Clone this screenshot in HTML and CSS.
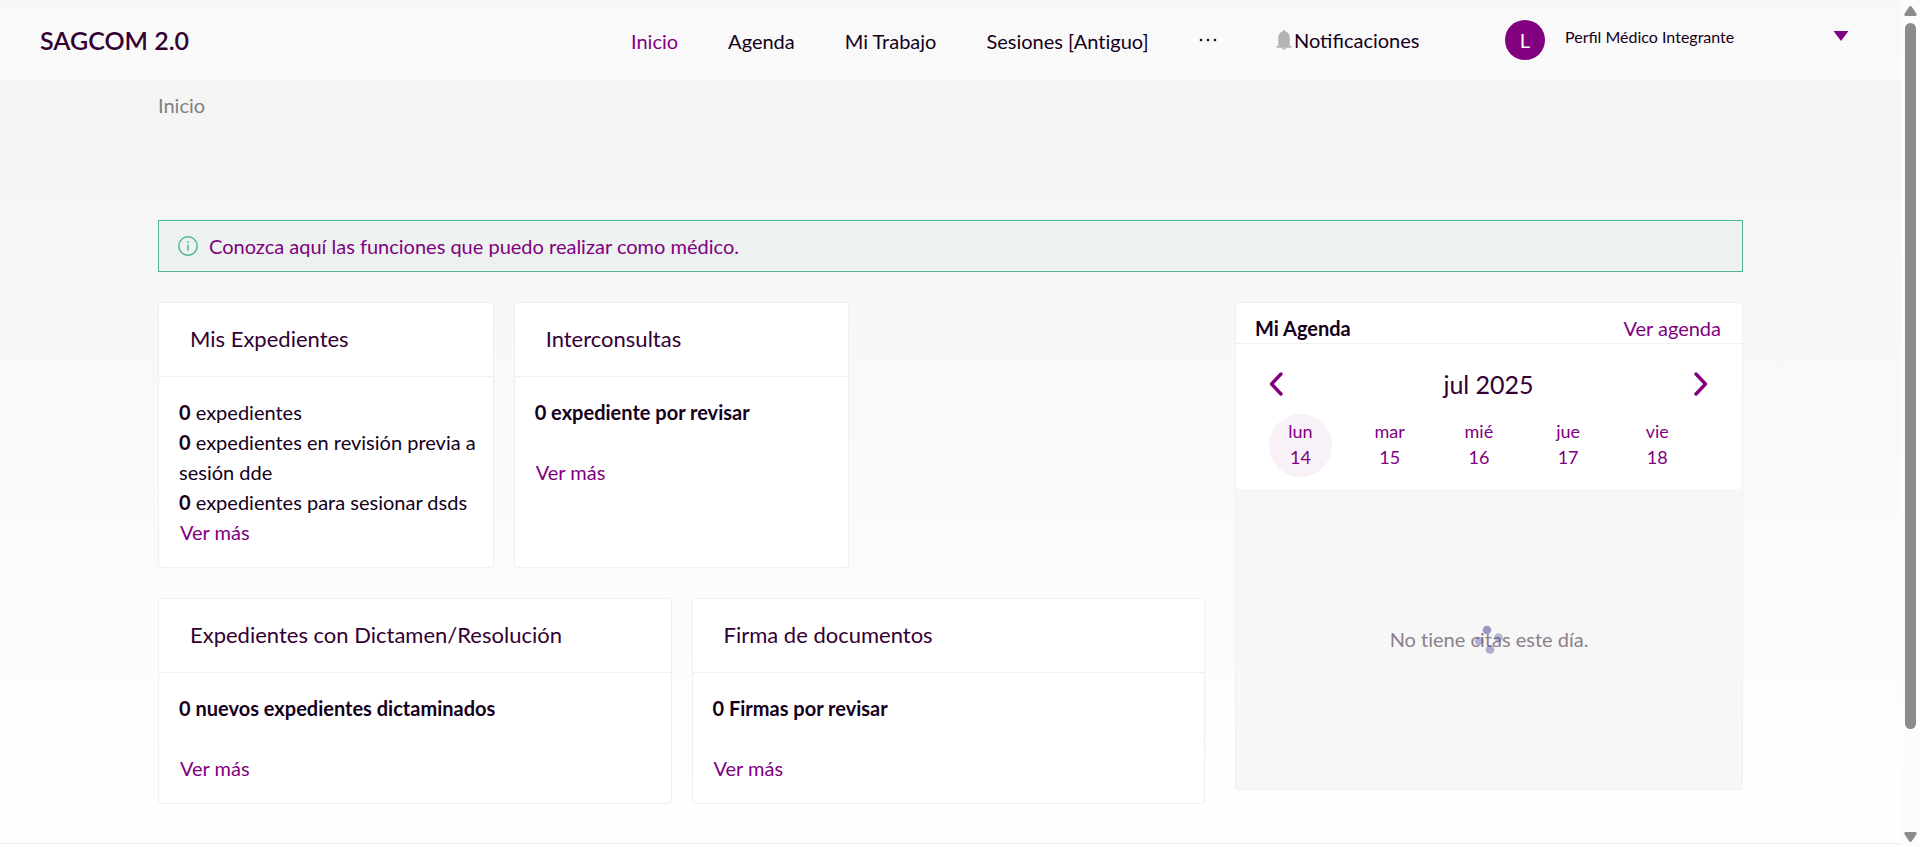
FILE: index.html
```html
<!DOCTYPE html>
<html lang="es">
<head>
<meta charset="utf-8">
<title>SAGCOM 2.0</title>
<link rel="stylesheet" href="styles.css">
</head>
<body>
<div class="page">
  <header class="topbar">
    <div class="brand">SAGCOM 2.0</div>
    <nav class="nav">
      <a class="nav-link active" href="#">Inicio</a>
      <a class="nav-link" href="#">Agenda</a>
      <a class="nav-link" href="#">Mi Trabajo</a>
      <a class="nav-link" href="#">Sesiones [Antiguo]</a>
      <button class="more" type="button" aria-label="Más opciones">
        <svg width="18" height="18" viewBox="0 0 18 18" fill="#1a0a1a"><circle cx="2" cy="8" r="1.3"/><circle cx="9" cy="8" r="1.3"/><circle cx="16" cy="8" r="1.3"/></svg>
      </button>
    </nav>
    <button class="notifications" type="button">
      <svg width="16" height="20" viewBox="0 0 16 20"><path fill="#b3b3b3" d="M8 0c.8 0 1.100.5 1.100 1.300C12 2 13.700 4.200 13.700 7.500V16H15.500v1.700H.5V16h1.800V7.500C2.300 4.200 4 2 6.900 1.300 6.900.5 7.200 0 8 0z"/><path fill="none" stroke="#b3b3b3" stroke-width="1.200" d="M6.400 17.500a1.600 1.700 0 0 0 3.200 0"/></svg>
      <span>Notificaciones</span>
    </button>
    <button class="profile" type="button">
      <span class="avatar">L</span>
      <span class="profile-name">Perfil Médico Integrante</span>
      <svg class="caret" width="16" height="10" viewBox="0 0 16 10"><path fill="#800080" d="M.5 0h15L8 10z"/></svg>
    </button>
  </header>

  <main class="content">
    <div class="breadcrumb">Inicio</div>

    <div class="alert">
      <svg width="20" height="20" viewBox="0 0 20 20" fill="none" stroke="#52b69a" stroke-width="1.500"><circle cx="10" cy="10" r="9.200"/><path d="M10 8.500v6.200M10 5.200v1.800"/></svg>
      <a href="#">Conozca aquí las funciones que puedo realizar como médico.</a>
    </div>

    <div class="columns">
      <div class="left">
        <div class="row thirds">
          <section class="card">
            <h2>Mis Expedientes</h2>
            <div class="card-body">
              <p><b>0</b> expedientes</p>
              <p><b>0</b> expedientes en revisión previa a sesión dde</p>
              <p><b>0</b> expedientes para sesionar dsds</p>
              <a class="see-more" href="#">Ver más</a>
            </div>
          </section>
          <section class="card">
            <h2>Interconsultas</h2>
            <div class="card-body spaced">
              <p><b>0 expediente por revisar</b></p>
              <a class="see-more" href="#">Ver más</a>
            </div>
          </section>
        </div>
        <div class="row halves">
          <section class="card">
            <h2>Expedientes con Dictamen/Resolución</h2>
            <div class="card-body spaced">
              <p><b>0 nuevos expedientes dictaminados</b></p>
              <a class="see-more" href="#">Ver más</a>
            </div>
          </section>
          <section class="card">
            <h2>Firma de documentos</h2>
            <div class="card-body spaced">
              <p><b>0 Firmas por revisar</b></p>
              <a class="see-more" href="#">Ver más</a>
            </div>
          </section>
        </div>
      </div>

      <section class="card agenda">
        <div class="agenda-head">
          <b>Mi Agenda</b>
          <a href="#">Ver agenda</a>
        </div>
        <div class="calendar">
          <div class="month">
            <button type="button" aria-label="Semana anterior"><svg width="14" height="24" viewBox="0 0 14 24"><path d="M12 2 2.500 12 12 22"/></svg></button>
            <span>jul 2025</span>
            <button type="button" aria-label="Semana siguiente"><svg width="14" height="24" viewBox="0 0 14 24"><path d="M2 2l9.500 10L2 22"/></svg></button>
          </div>
          <div class="days">
            <button class="day selected" type="button"><span>lun</span><span>14</span></button>
            <button class="day" type="button"><span>mar</span><span>15</span></button>
            <button class="day" type="button"><span>mié</span><span>16</span></button>
            <button class="day" type="button"><span>jue</span><span>17</span></button>
            <button class="day" type="button"><span>vie</span><span>18</span></button>
          </div>
        </div>
        <div class="empty">
          <p>No tiene citas este día.</p>
          <svg class="spinner" width="32" height="32" viewBox="0 0 32 32" fill="#333385"><circle cx="13" cy="5" r="4.300" opacity=".48"/><circle cx="24.500" cy="12.500" r="4.300" opacity=".32"/><circle cx="5" cy="16" r="4.300" opacity=".34"/><circle cx="16" cy="24.500" r="4.300" opacity=".38"/></svg>
        </div>
      </section>
    </div>
  </main>
  <footer class="footer"></footer>
</div>
<div class="scrollbar" aria-hidden="true">
  <svg width="13" height="10" viewBox="0 0 13 10"><path d="M6.500 0q.8 0 1.300.8l4.700 7q.6 1.700-1 2.200h-10q-1.600-.5-1-2.200l4.700-7Q5.700 0 6.500 0z"/></svg>
  <div class="track"><div class="thumb"></div></div>
  <svg width="13" height="10" viewBox="0 0 13 10"><path d="M6.500 10q.8 0 1.300-.8l4.700-7q.6-1.700-1-2.200h-10q-1.600.5-1 2.200l4.700 7q.5.800 1.300.8z"/></svg>
</div>
</body>
</html>
```
FILE: styles.css
```css
* { box-sizing: border-box; }

body {
  margin: 0;
  display: flex;
  height: 100vh;
  overflow: hidden;
  font-family: Lato, "Noto Sans", sans-serif;
  font-size: 20px;
  line-height: 30px;
  font-variant-ligatures: none;
  color: #14001a;
}

p { margin: 0; }
a { color: #800080; text-decoration: none; }
svg { display: block; flex: none; }

button {
  padding: 0;
  border: 0;
  background: none;
  font: inherit;
  color: inherit;
  cursor: pointer;
}

.page {
  flex: 1;
  min-width: 0;
  display: flex;
  flex-direction: column;
  background: linear-gradient(#f3f3f3, #ffffff);
}

.topbar {
  flex: none;
  display: grid;
  grid-template-columns: 631fr 645fr 229fr 396fr;
  align-items: center;
  height: 80px;
  background: linear-gradient(#f8f8f8, #fafafa);
}

.brand {
  padding-left: 40px;
  font-size: 25px;
  font-weight: 600;
  color: #330033;
}

.nav { display: flex; align-items: center; gap: 50px; padding-top: 1px; }
.nav-link { color: #14001a; white-space: nowrap; }
.nav-link.active { color: #800080; }

.notifications {
  display: flex;
  align-items: center;
  gap: 2px;
  font-variant-ligatures: normal;
}

.profile {
  display: flex;
  align-items: center;
  gap: 20px;
  padding-right: 52px;
  font-size: 16px;
  font-variant-ligatures: normal;
}
.avatar {
  flex: none;
  width: 40px;
  height: 40px;
  border-radius: 50%;
  background: #800080;
  color: #fff;
  font-size: 20px;
  line-height: 40px;
  text-align: center;
}
.profile-name { margin-bottom: 6px; white-space: nowrap; }
.caret { margin: 0 0 8px auto; }

.content { flex: 1 0 auto; padding: 0 158px; }
.breadcrumb { padding-top: 10px; color: #808080; }

.alert {
  display: flex;
  align-items: center;
  gap: 11px;
  margin-top: 100px;
  padding: 10px 19px;
  border: 1px solid #52b69a;
  background: #edf1f0;
}

.columns {
  display: grid;
  grid-template-columns: minmax(0, 1047fr) minmax(0, 508fr);
  align-items: start;
  gap: 30px;
  margin-top: 30px;
}
.left { display: grid; gap: 30px; }
.row { display: grid; gap: 20px; }
.thirds { grid-template-columns: repeat(3, minmax(0, 1fr)); }
.halves { grid-template-columns: repeat(2, minmax(0, 1fr)); }

.card {
  border: 1px solid #f0f0f0;
  border-radius: 3px;
  background: #fff;
}
.card h2 {
  margin: 0;
  padding: 21px 31px 22px;
  border-bottom: 1px solid #f0f0f0;
  font-size: 22px;
  font-weight: 400;
  color: #330033;
}
.card-body { padding: 20px 12px 20px 20px; }
.see-more { padding-left: 1px; }
.spaced { display: grid; gap: 30px; align-content: start; }

.agenda { overflow: hidden; }
.agenda-head {
  display: flex;
  justify-content: space-between;
  padding: 10px 21px 0 19px;
  border-bottom: 1px solid #f0f0f0;
}
.calendar { padding: 25px 27px 12px 33px; }
.month {
  display: flex;
  align-items: center;
  justify-content: space-between;
  padding-right: 7px;
  font-size: 25px;
  color: #330033;
}
.month path {
  fill: none;
  stroke: #800080;
  stroke-width: 3.4;
  stroke-linecap: round;
  stroke-linejoin: round;
}
.days {
  display: grid;
  grid-template-columns: repeat(5, 1fr);
  margin-top: 15px;
}
.day {
  display: flex;
  flex-direction: column;
  align-items: center;
  justify-content: center;
  width: 63px;
  height: 63px;
  padding-bottom: 4px;
  border-radius: 50%;
  font-size: 18px;
  line-height: 26px;
  color: #800080;
}
.day.selected { background: #f8f1f8; }

.empty {
  position: relative;
  display: grid;
  place-items: center;
  height: 300px;
  background: #f7f7f7;
  color: #8c808c;
}
.spinner {
  position: absolute;
  top: calc(50% - 14px);
  left: calc(50% - 15px);
}

.footer {
  flex: none;
  height: 4px;
  border-top: 1px solid #ededed;
  background: #fdfdfd;
}

.scrollbar {
  flex: none;
  display: flex;
  flex-direction: column;
  align-items: center;
  gap: 7px;
  width: 19px;
  padding: 6px 0 5px;
  background: #fcfcfc;
  fill: #8b8b8b;
}
.track { flex: 1; width: 11px; }
.thumb { height: 88%; border-radius: 6px; background: #8b8b8b; }
```
